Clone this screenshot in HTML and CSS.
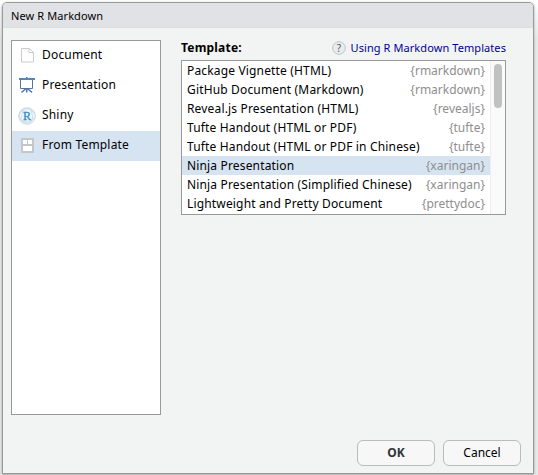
FILE: index.html
```
<!DOCTYPE html>
<html lang="en">
<head>
<meta charset="utf-8">
<title>New R Markdown</title>
<link rel="stylesheet" href="styles.css">
</head>
<body>
<div class="dialog">
  <header class="title">New R Markdown</header>
  <main class="content">
    <ul class="types">
      <li><svg width="18" height="18" viewBox="0 0 18 18"><path d="M3.500 1.500h8l4 4v9.500h-12zM11 1.500v4h4.500" fill="#fff" stroke="#c9cbd0"/></svg><span>Document</span></li>
      <li><svg width="18" height="18" viewBox="0 0 18 18"><path d="M2.500 3v8.500h12V3" fill="#fff" stroke="#55749f"/><path d="M8 0h1.500v2H8z" fill="#4b7aac"/><path d="M1 1h16v2H1z" fill="#5487b9"/><path d="M8.700 11.500v4M8 11.500L3.500 15.500M9.500 11.500l4.500 4" stroke="#4f76a6" stroke-width="1.500" fill="none"/></svg><span>Presentation</span></li>
      <li><svg width="18" height="18" viewBox="0 0 18 18"><circle cx="9" cy="9" r="8.300" fill="#f0f6fa" stroke="#b8cfe1" stroke-width=".8"/><path d="M2 5l5-3 5 0 4 4M1 10l4 5 6 1 5-5M2 5l-1 5M5 2.500L3 13M13 3l2 9M4 14l10 0" fill="none" stroke="#bdd3e4" stroke-width=".7"/><circle cx="9" cy="9" r="5" fill="#edf5fb"/><text x="9" y="13" text-anchor="middle" class="shiny-r">R</text></svg><span>Shiny</span></li>
      <li class="selected"><svg width="18" height="18" viewBox="0 0 18 18"><path d="M3 1h13v15H3z" fill="#c4c6c9"/><path d="M5 3h4v4H5zM10 3h4v4h-4zM5 9h9v5H5z" fill="#fff"/></svg><span>From Template</span></li>
    </ul>
    <section class="templates">
      <div class="heading"><strong>Template:</strong><a class="help"><svg width="14" height="14" viewBox="0 0 14 14"><circle cx="7" cy="7" r="6.300" fill="#eaebed" stroke="#bfc1c5"/><text x="7" y="10.500" text-anchor="middle" class="question">?</text></svg><span>Using R Markdown Templates</span></a></div>
      <div class="listbox">
        <ul class="rows">
          <li><span>Package Vignette (HTML)</span><em>{rmarkdown}</em></li>
          <li><span>GitHub Document (Markdown)</span><em>{rmarkdown}</em></li>
          <li><span>Reveal.js Presentation (HTML)</span><em>{revealjs}</em></li>
          <li><span>Tufte Handout (HTML or PDF)</span><em>{tufte}</em></li>
          <li><span>Tufte Handout (HTML or PDF in Chinese)</span><em>{tufte}</em></li>
          <li class="selected"><span>Ninja Presentation</span><em>{xaringan}</em></li>
          <li><span>Ninja Presentation (Simplified Chinese)</span><em>{xaringan}</em></li>
          <li><span>Lightweight and Pretty Document</span><em>{prettydoc}</em></li>
        </ul>
        <div class="scrollbar"><div class="thumb"></div></div>
      </div>
    </section>
  </main>
  <footer class="actions"><button class="ok">OK</button><button>Cancel</button></footer>
</div>
</body>
</html>
```
FILE: styles.css
```
* { box-sizing: border-box; }
body {
  margin: 0;
  height: 475px;
  overflow: hidden;
  padding: 2px 4px 1px 2px;
  background: linear-gradient(#fff, #e9e9e9 40px);
  font: 12px/19px "Lucida Grande", "Noto Sans", sans-serif;
  color: #000;
}
ul { list-style: none; margin: 0; padding: 0; }
.dialog {
  display: flex;
  flex-direction: column;
  height: 472px;
  border: 1px solid #999;
  border-radius: 5px 5px 0 0;
  background: #f2f4f4;
  box-shadow: 0 1px 3px rgba(0, 0, 0, .3);
  overflow: hidden;
}
.title {
  height: 25px;
  padding: 4px 8px;
  font-size: 11px;
  letter-spacing: .1px;
  line-height: 18px;
  background: #e1e2e5;
  border-bottom: 1px solid #dcdde0;
}
.content {
  display: flex;
  gap: 20px;
  flex: 1;
  padding: 12px 27px 0 8px;
}
.types {
  width: 150px;
  height: 375px;
  border: 1px solid #999;
  background: #fff;
  letter-spacing: .18px;
}
.types li {
  display: flex;
  align-items: center;
  gap: 6px;
  height: 30px;
  padding-left: 6px;
}
.types li span { padding-bottom: 3px; }
.selected { background: #d6e4f2; }
.shiny-r { font: 12px "Liberation Serif", serif; fill: #318cc9; stroke: #318cc9; stroke-width: .3px; letter-spacing: 0; }
.templates { flex: 1; }
.heading {
  display: flex;
  justify-content: space-between;
  align-items: center;
  height: 20px;
  padding-bottom: 5px;
}
.heading strong { letter-spacing: .2px; }
.help { display: flex; align-items: center; gap: 5px; font-size: 11px; letter-spacing: .08px; color: #00008f; }
.question { font: 10px "Noto Sans", sans-serif; fill: #50545f; }
.listbox {
  display: flex;
  height: 155px;
  border: 1px solid #999;
  background: #fff;
}
.rows { flex: 1; }
.rows li {
  display: flex;
  justify-content: space-between;
  height: 19px;
  padding: 0 5px;
  white-space: nowrap;
}
.rows span { letter-spacing: .16px; }
.rows em { font-style: normal; color: #8e8e8e; }
.scrollbar {
  width: 15px;
  padding: 3px 3px 0;
  background: #fafafa;
  border-left: 1px solid #ededed;
}
.thumb { width: 8px; height: 44px; border-radius: 4px; background: #c1c1c1; }
.actions {
  display: flex;
  justify-content: flex-end;
  gap: 8px;
  padding: 0 12px 7px 0;
}
button {
  width: 78px;
  height: 26px;
  padding: 0 0 2px;
  border: 1px solid #bbb;
  border-radius: 6px;
  background: #f7f7f8;
  font: inherit;
  color: #000;
}
.ok { font-weight: bold; color: #2e3636; }
```
